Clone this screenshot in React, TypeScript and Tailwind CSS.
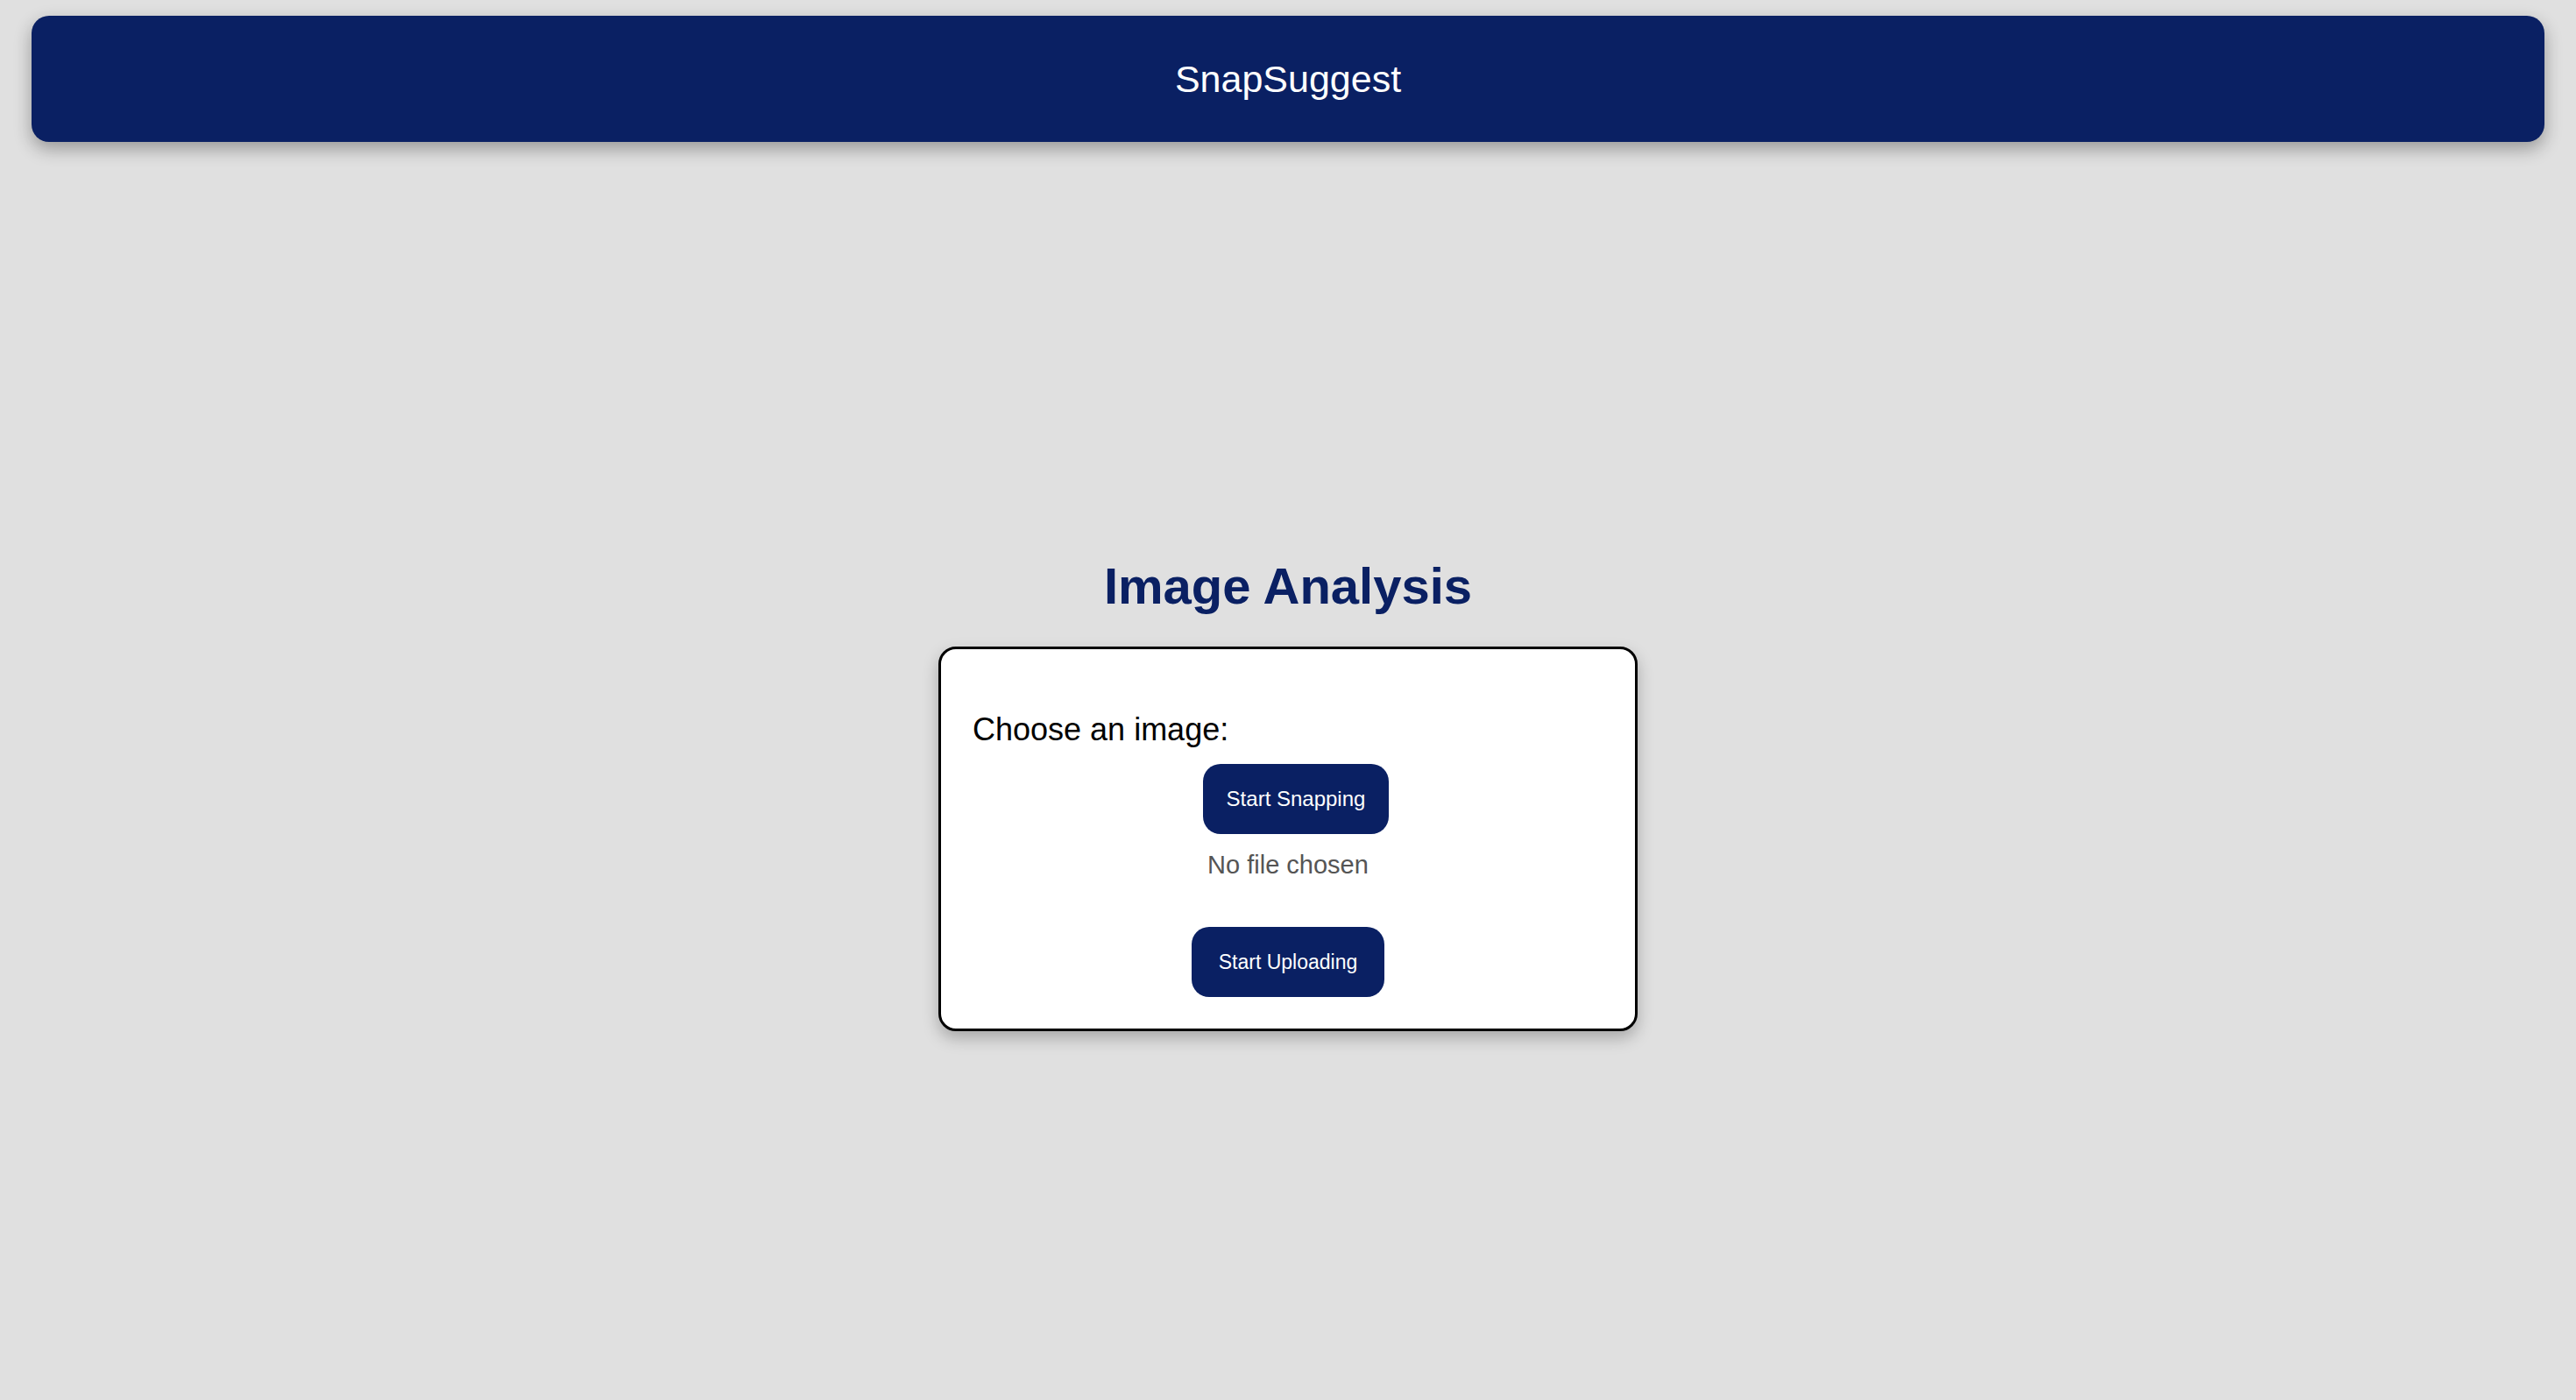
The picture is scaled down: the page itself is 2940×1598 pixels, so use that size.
import React from "react";

export default function App() {
  return (
    <div className="h-screen overflow-hidden w-full bg-[#e0e0e0] font-['Liberation_Sans',Arial,sans-serif] pt-[18px]">
      <header className="mx-[36px] h-[144px] rounded-[20px] bg-[#0a2063] shadow-[0_8px_20px_rgba(0,0,0,0.32)] flex items-center justify-center">
        <span className="text-white text-[43px] leading-[50px]">SnapSuggest</span>
      </header>

      <main className="flex flex-col items-center pt-[474px]">
        <h1 className="text-[#0a2063] text-[58px] leading-[66px] font-bold">Image Analysis</h1>

        <div className="mt-[36px] w-[798px] bg-white border-[3px] border-black rounded-[20px] shadow-[0_8px_18px_rgba(0,0,0,0.25)] px-[36px] pt-[72px] pb-[36px] flex flex-col items-center">
          <label className="self-start text-black text-[36px] leading-[40px]">Choose an image:</label>

          <button className="mt-[19px] ml-[18px] w-[212px] h-[80px] rounded-[20px] bg-[#0a2063] text-white text-[24px] leading-[28px] flex items-center justify-center">
            Start Snapping
          </button>

          <span className="mt-[19px] text-[#555555] text-[29px] leading-[32px]">No file chosen</span>

          <button className="mt-[55px] w-[220px] h-[80px] rounded-[20px] bg-[#0a2063] text-white text-[23px] leading-[26px] flex items-center justify-center">
            Start Uploading
          </button>
        </div>
      </main>
    </div>
  );
}
